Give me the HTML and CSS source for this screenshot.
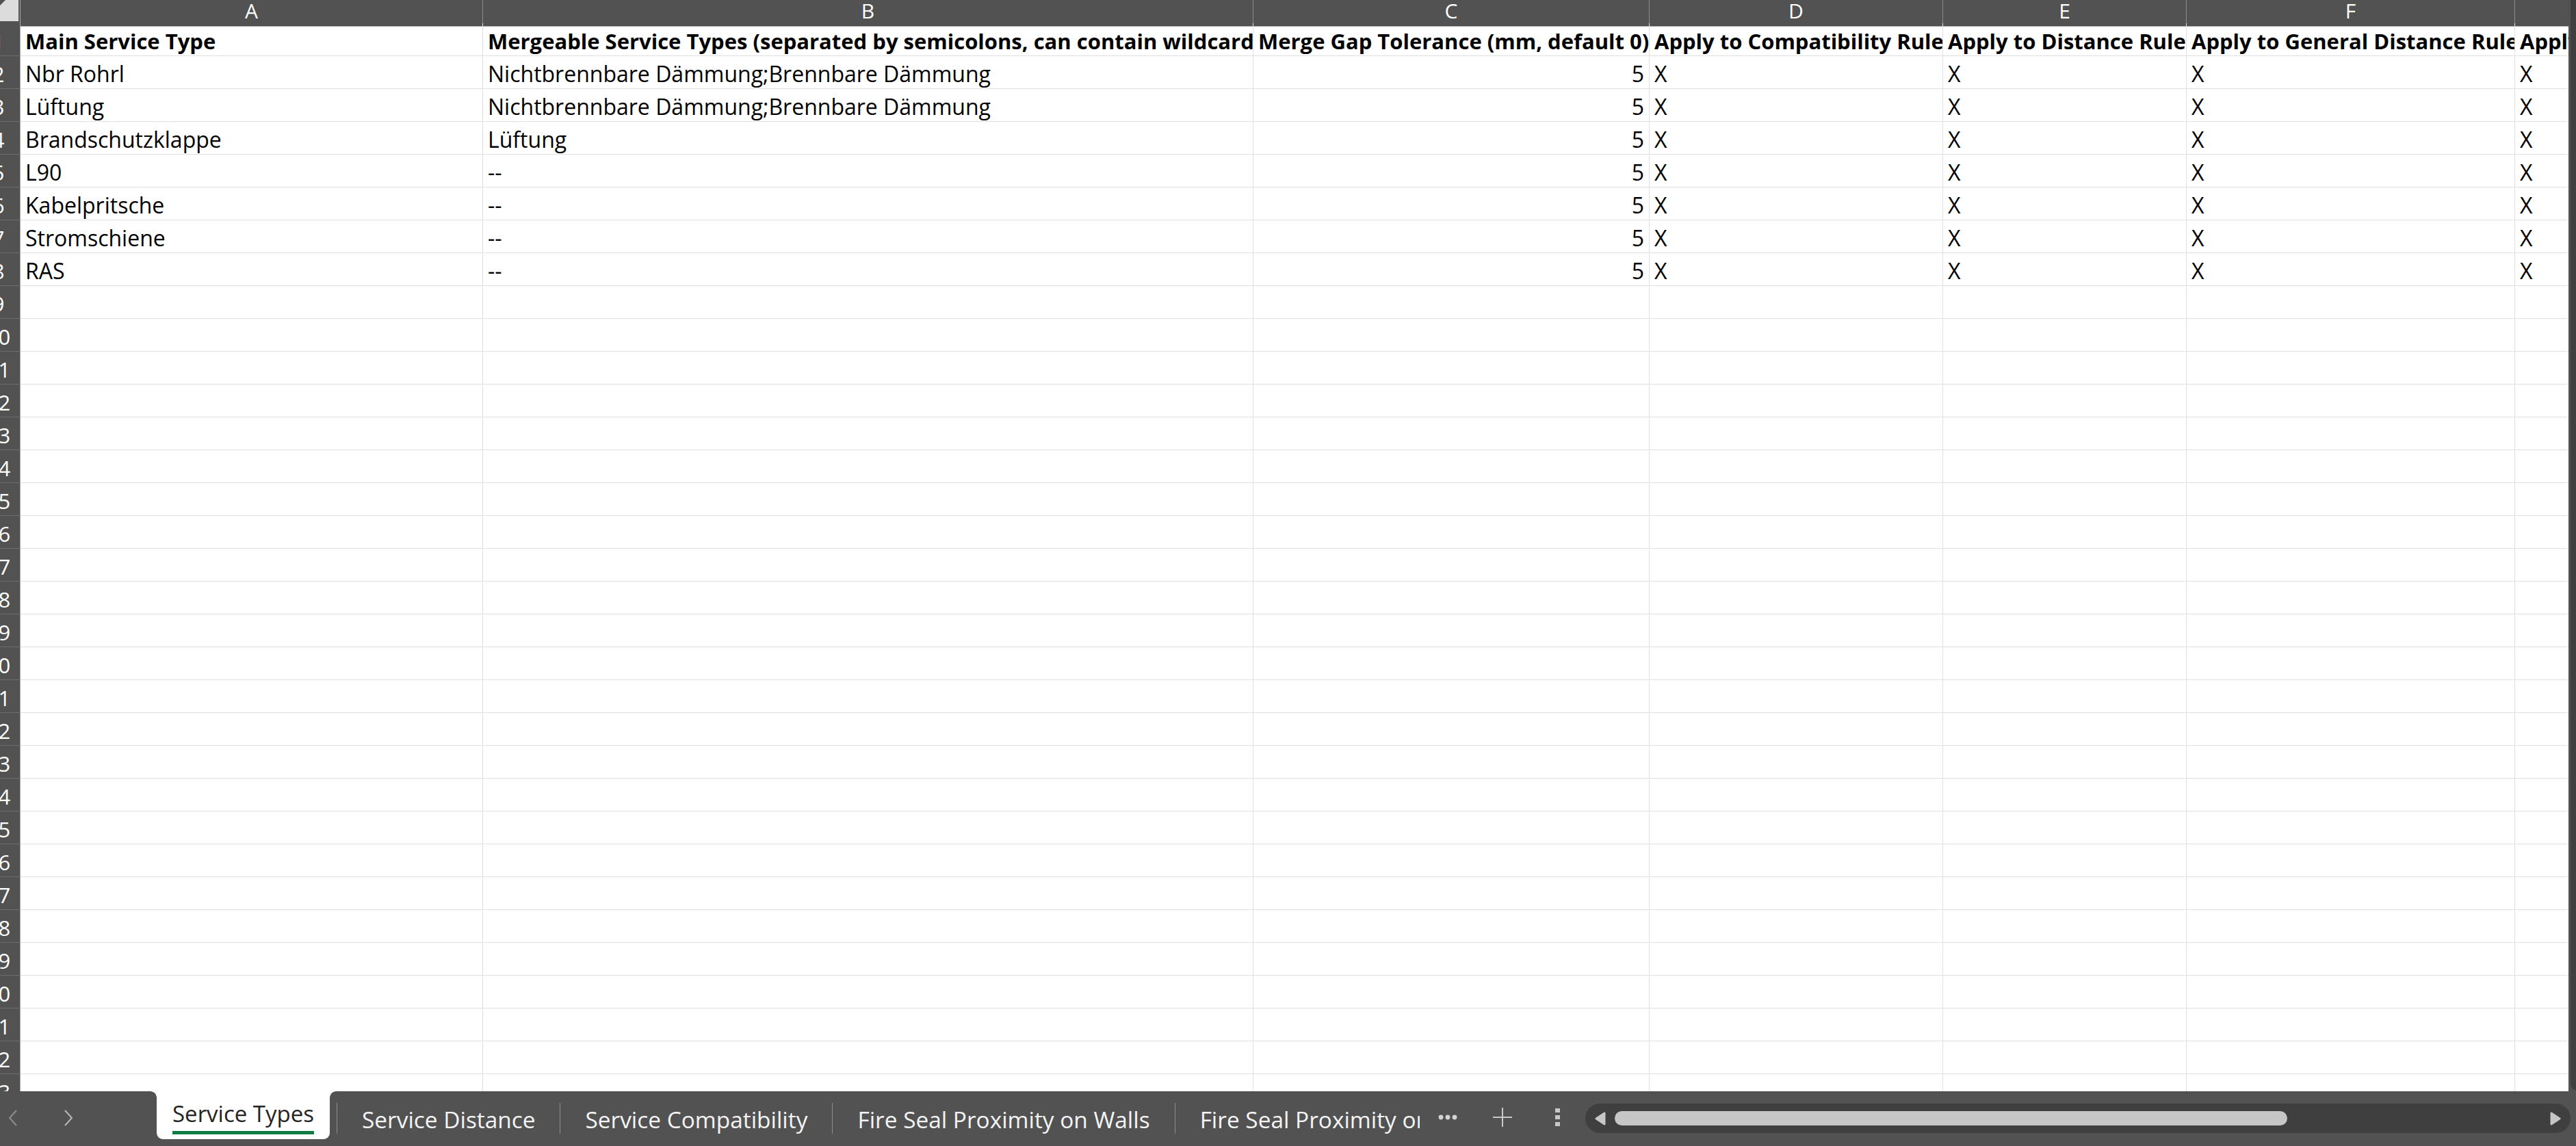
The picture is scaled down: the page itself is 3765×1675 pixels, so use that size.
FILE: index.html
```html
<!DOCTYPE html>
<html lang="en">
<head>
    <meta charset="UTF-8">
    <title>Service Types</title>
    <link rel="stylesheet" href="styles.css">
</head>
<body>
<div class="app">
    <div class="sheet">
        <div class="grid">
            <div class="table">
                <div class="row hdr">
                    <div class="corner">
                        <svg width="63" height="33" viewBox="0 0 63 33"><polygon points="61,31 61,-19 11,31" fill="#dcdcdc"/></svg>
                    </div>
                    <div class="ch">A</div><div class="ch">B</div><div class="ch">C</div><div class="ch">D</div><div class="ch">E</div><div class="ch">F</div><div class="ch">G</div>
                </div>
                <div class="row bold">
                    <div class="rh">1</div>
                    <div class="c">Main Service Type</div>
                    <div class="c">Mergeable Service Types (separated by semicolons, can contain wildcards)</div>
                    <div class="c">Merge Gap Tolerance (mm, default 0)</div>
                    <div class="c">Apply to Compatibility Rule</div>
                    <div class="c">Apply to Distance Rule</div>
                    <div class="c">Apply to General Distance Rule</div>
                    <div class="c">Apply to Fire Seal Rule</div>
                </div>
                <div class="row"><div class="rh">2</div><div class="c">Nbr Rohrl</div><div class="c">Nichtbrennbare Dämmung;Brennbare Dämmung</div><div class="c num">5</div><div class="c">X</div><div class="c">X</div><div class="c">X</div><div class="c">X</div></div>
                <div class="row"><div class="rh">3</div><div class="c">Lüftung</div><div class="c">Nichtbrennbare Dämmung;Brennbare Dämmung</div><div class="c num">5</div><div class="c">X</div><div class="c">X</div><div class="c">X</div><div class="c">X</div></div>
                <div class="row"><div class="rh">4</div><div class="c">Brandschutzklappe</div><div class="c">Lüftung</div><div class="c num">5</div><div class="c">X</div><div class="c">X</div><div class="c">X</div><div class="c">X</div></div>
                <div class="row"><div class="rh">5</div><div class="c">L90</div><div class="c">--</div><div class="c num">5</div><div class="c">X</div><div class="c">X</div><div class="c">X</div><div class="c">X</div></div>
                <div class="row"><div class="rh">6</div><div class="c">Kabelpritsche</div><div class="c">--</div><div class="c num">5</div><div class="c">X</div><div class="c">X</div><div class="c">X</div><div class="c">X</div></div>
                <div class="row"><div class="rh">7</div><div class="c">Stromschiene</div><div class="c">--</div><div class="c num">5</div><div class="c">X</div><div class="c">X</div><div class="c">X</div><div class="c">X</div></div>
                <div class="row"><div class="rh">8</div><div class="c">RAS</div><div class="c">--</div><div class="c num">5</div><div class="c">X</div><div class="c">X</div><div class="c">X</div><div class="c">X</div></div>
                <div class="row"><div class="rh">9</div><div class="c"></div><div class="c"></div><div class="c"></div><div class="c"></div><div class="c"></div><div class="c"></div><div class="c"></div></div>
                <div class="row"><div class="rh">10</div><div class="c"></div><div class="c"></div><div class="c"></div><div class="c"></div><div class="c"></div><div class="c"></div><div class="c"></div></div>
                <div class="row"><div class="rh">11</div><div class="c"></div><div class="c"></div><div class="c"></div><div class="c"></div><div class="c"></div><div class="c"></div><div class="c"></div></div>
                <div class="row"><div class="rh">12</div><div class="c"></div><div class="c"></div><div class="c"></div><div class="c"></div><div class="c"></div><div class="c"></div><div class="c"></div></div>
                <div class="row"><div class="rh">13</div><div class="c"></div><div class="c"></div><div class="c"></div><div class="c"></div><div class="c"></div><div class="c"></div><div class="c"></div></div>
                <div class="row"><div class="rh">14</div><div class="c"></div><div class="c"></div><div class="c"></div><div class="c"></div><div class="c"></div><div class="c"></div><div class="c"></div></div>
                <div class="row"><div class="rh">15</div><div class="c"></div><div class="c"></div><div class="c"></div><div class="c"></div><div class="c"></div><div class="c"></div><div class="c"></div></div>
                <div class="row"><div class="rh">16</div><div class="c"></div><div class="c"></div><div class="c"></div><div class="c"></div><div class="c"></div><div class="c"></div><div class="c"></div></div>
                <div class="row"><div class="rh">17</div><div class="c"></div><div class="c"></div><div class="c"></div><div class="c"></div><div class="c"></div><div class="c"></div><div class="c"></div></div>
                <div class="row"><div class="rh">18</div><div class="c"></div><div class="c"></div><div class="c"></div><div class="c"></div><div class="c"></div><div class="c"></div><div class="c"></div></div>
                <div class="row"><div class="rh">19</div><div class="c"></div><div class="c"></div><div class="c"></div><div class="c"></div><div class="c"></div><div class="c"></div><div class="c"></div></div>
                <div class="row"><div class="rh">20</div><div class="c"></div><div class="c"></div><div class="c"></div><div class="c"></div><div class="c"></div><div class="c"></div><div class="c"></div></div>
                <div class="row"><div class="rh">21</div><div class="c"></div><div class="c"></div><div class="c"></div><div class="c"></div><div class="c"></div><div class="c"></div><div class="c"></div></div>
                <div class="row"><div class="rh">22</div><div class="c"></div><div class="c"></div><div class="c"></div><div class="c"></div><div class="c"></div><div class="c"></div><div class="c"></div></div>
                <div class="row"><div class="rh">23</div><div class="c"></div><div class="c"></div><div class="c"></div><div class="c"></div><div class="c"></div><div class="c"></div><div class="c"></div></div>
                <div class="row"><div class="rh">24</div><div class="c"></div><div class="c"></div><div class="c"></div><div class="c"></div><div class="c"></div><div class="c"></div><div class="c"></div></div>
                <div class="row"><div class="rh">25</div><div class="c"></div><div class="c"></div><div class="c"></div><div class="c"></div><div class="c"></div><div class="c"></div><div class="c"></div></div>
                <div class="row"><div class="rh">26</div><div class="c"></div><div class="c"></div><div class="c"></div><div class="c"></div><div class="c"></div><div class="c"></div><div class="c"></div></div>
                <div class="row"><div class="rh">27</div><div class="c"></div><div class="c"></div><div class="c"></div><div class="c"></div><div class="c"></div><div class="c"></div><div class="c"></div></div>
                <div class="row"><div class="rh">28</div><div class="c"></div><div class="c"></div><div class="c"></div><div class="c"></div><div class="c"></div><div class="c"></div><div class="c"></div></div>
                <div class="row"><div class="rh">29</div><div class="c"></div><div class="c"></div><div class="c"></div><div class="c"></div><div class="c"></div><div class="c"></div><div class="c"></div></div>
                <div class="row"><div class="rh">30</div><div class="c"></div><div class="c"></div><div class="c"></div><div class="c"></div><div class="c"></div><div class="c"></div><div class="c"></div></div>
                <div class="row"><div class="rh">31</div><div class="c"></div><div class="c"></div><div class="c"></div><div class="c"></div><div class="c"></div><div class="c"></div><div class="c"></div></div>
                <div class="row"><div class="rh">32</div><div class="c"></div><div class="c"></div><div class="c"></div><div class="c"></div><div class="c"></div><div class="c"></div><div class="c"></div></div>
                <div class="row"><div class="rh">33</div><div class="c"></div><div class="c"></div><div class="c"></div><div class="c"></div><div class="c"></div><div class="c"></div><div class="c"></div></div>
            </div>
        </div>
        <div class="vscroll"><div class="vtrack"></div></div>
    </div>

    <div class="tabbar">
        <div class="nav">
            <svg class="chev" width="14" height="24" viewBox="0 0 14 24"><polyline points="12,1 2,12 12,23" fill="none" stroke="#8e8e8e" stroke-width="2"/></svg>
            <svg class="chev next" width="14" height="24" viewBox="0 0 14 24"><polyline points="2,1 12,12 2,23" fill="none" stroke="#b8b8b8" stroke-width="2"/></svg>
        </div>
        <div class="tabs">
            <div class="tab active"><span class="label">Service Types</span><span class="underline"></span></div>
            <span class="sep first"></span>
            <div class="tab"><span class="label">Service Distance</span></div>
            <span class="sep"></span>
            <div class="tab"><span class="label">Service Compatibility</span></div>
            <span class="sep"></span>
            <div class="tab"><span class="label">Fire Seal Proximity on Walls</span></div>
            <span class="sep"></span>
            <div class="tab"><span class="label">Fire Seal Proximity on Slabs</span></div>
        </div>
        <div class="tool more">
            <svg width="28" height="8" viewBox="0 0 28 8"><circle cx="4" cy="4" r="3.4" fill="#d4d4d4"/><circle cx="14" cy="4" r="3.4" fill="#d4d4d4"/><circle cx="24" cy="4" r="3.4" fill="#d4d4d4"/></svg>
        </div>
        <div class="tool plus">
            <svg width="28" height="28" viewBox="0 0 28 28"><path d="M14 0V28M0 14H28" stroke="#c8c8c8" stroke-width="2"/></svg>
        </div>
        <div class="tool kebab">
            <svg width="7" height="26" viewBox="0 0 7 26"><rect x="0" y="0" width="7" height="6" fill="#c8c8c8"/><rect x="0" y="10" width="7" height="6" fill="#c8c8c8"/><rect x="0" y="20" width="7" height="6" fill="#c8c8c8"/></svg>
        </div>
        <div class="hscroll">
            <svg width="17" height="20" viewBox="0 0 17 20"><path d="M15 2 L3 10 L15 18 Z" fill="#c6c6c6" stroke="#c6c6c6" stroke-width="3" stroke-linejoin="round"/></svg>
            <div class="thumb"></div>
            <svg class="right" width="17" height="20" viewBox="0 0 17 20"><path d="M2 2 L14 10 L2 18 Z" fill="#c6c6c6" stroke="#c6c6c6" stroke-width="3" stroke-linejoin="round"/></svg>
        </div>
    </div>
</div>
</body>
</html>
```

FILE: styles.css
```css
* {
    box-sizing: border-box;
}
body {
    margin: 0;
    background-color: #525252;
    font-family: "Open Sans", "Noto Sans", sans-serif;
    overflow: hidden;
}
.app {
    display: flex;
    flex-direction: column;
    width: 3765px;
    height: 1675px;
}
.sheet {
    display: flex;
    height: 1595px;
}
.grid {
    flex: 1;
    overflow: hidden;
    background: #fff;
}
.table {
    margin-left: -34px;
}
.row {
    display: grid;
    grid-template-columns: 64px 676px 1126px 579px 429px 356px 480px 400px;
    height: 48px;
}
.row.hdr {
    height: 34px;
}
.corner, .ch {
    background: #525252;
    border-bottom: 1px solid #a8a8a8;
}
.corner {
    border-right: 1px solid #a8a8a8;
}
.ch {
    color: #fff;
    text-align: center;
    font-size: 30px;
    line-height: 32px;
    border-right: 1px solid #8c8c8c;
}
.rh {
    background: #525252;
    color: #fff;
    text-align: center;
    font-size: 31px;
    line-height: 40px;
    padding-top: 6px;
    border-right: 1px solid #a8a8a8;
    border-bottom: 1px solid #6c6c6c;
}
.c {
    font-size: 32px;
    line-height: 40px;
    padding: 6px 7px 0;
    color: #000;
    white-space: nowrap;
    overflow: hidden;
    border-right: 1px solid #e1e1e1;
    border-bottom: 1px solid #e1e1e1;
}
.num {
    text-align: right;
}
.bold .c {
    font-size: 31px;
    font-weight: 700;
}
.vscroll {
    width: 11px;
    padding: 0 0 2px 3px;
}
.vtrack {
    height: 100%;
    background: #3f3f3f;
    border-radius: 0 0 0 10px;
}

/* sheet tabs */
.tabbar {
    display: flex;
    height: 80px;
}
.nav {
    width: 221px;
    display: flex;
    align-items: flex-start;
    padding: 27px 0 0 12px;
}
.chev.next {
    margin-left: 67px;
}
.tabs {
    display: flex;
    align-items: flex-start;
    width: 1854px;
    padding-left: 8px;
    overflow: hidden;
}
.tab {
    flex-shrink: 0;
    padding: 19px 36px 0;
    color: #f4f4f4;
    font-size: 33.4px;
    white-space: nowrap;
}
.label {
    display: block;
    line-height: 44px;
}
.tab.active {
    position: relative;
    height: 70px;
    padding: 11px 23px 0;
    background: #fff;
    color: #242424;
    font-size: 33px;
    border-radius: 0 0 9px 9px;
}
.tab.active::before, .tab.active::after {
    content: "";
    position: absolute;
    top: 0;
    width: 9px;
    height: 9px;
}
.tab.active::before {
    left: -9px;
    background: radial-gradient(circle at 0 100%, #525252 8.5px, #fff 9px);
}
.tab.active::after {
    right: -9px;
    background: radial-gradient(circle at 100% 100%, #525252 8.5px, #fff 9px);
}
.underline {
    display: block;
    height: 5px;
    margin-top: 3px;
    background: #107c41;
}
.sep {
    flex-shrink: 0;
    width: 1px;
    height: 45px;
    margin-top: 17px;
    background: #8e8e8e;
}
.sep.first {
    margin-left: 10px;
}
.tool {
    display: flex;
    align-items: center;
    height: 76px;
}
.more {
    margin-left: 27px;
}
.plus {
    margin-left: 52px;
}
.kebab {
    margin-left: 63px;
}
.hscroll {
    display: flex;
    align-items: center;
    width: 1440px;
    height: 43px;
    margin: 18px 0 0 37px;
    padding: 0 13px;
    background: #3f3f3f;
    border-radius: 22px;
}
.thumb {
    width: 983px;
    height: 21px;
    margin-left: 13px;
    background: #c6c6c6;
    border-radius: 11px;
}
.hscroll .right {
    margin-left: auto;
}
```
